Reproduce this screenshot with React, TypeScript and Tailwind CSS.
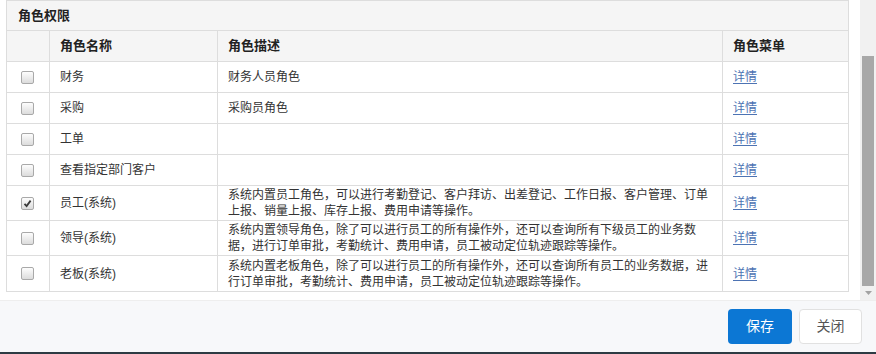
import React from "react";

type Role = {
  name: string;
  desc: string[];
  checked?: boolean;
};

const roles: Role[] = [
  { name: "财务", desc: ["财务人员角色"] },
  { name: "采购", desc: ["采购员角色"] },
  { name: "工单", desc: [] },
  { name: "查看指定部门客户", desc: [] },
  {
    name: "员工(系统)",
    checked: true,
    desc: [
      "系统内置员工角色，可以进行考勤登记、客户拜访、出差登记、工作日报、客户管理、订单",
      "上报、销量上报、库存上报、费用申请等操作。",
    ],
  },
  {
    name: "领导(系统)",
    desc: [
      "系统内置领导角色，除了可以进行员工的所有操作外，还可以查询所有下级员工的业务数",
      "据，进行订单审批，考勤统计、费用申请，员工被动定位轨迹跟踪等操作。",
    ],
  },
  {
    name: "老板(系统)",
    desc: [
      "系统内置老板角色，除了可以进行员工的所有操作外，还可以查询所有员工的业务数据，进",
      "行订单审批，考勤统计、费用申请，员工被动定位轨迹跟踪等操作。",
    ],
  },
];

function Checkbox({ checked }: { checked?: boolean }) {
  return (
    <span className="flex h-[13px] w-[13px] items-center justify-center rounded-[2px] border border-[#a9a9a9] bg-gradient-to-b from-[#fdfdfd] to-[#dcdcdc]">
      {checked && (
        <svg width="9" height="9" viewBox="0 0 9 9">
          <path d="M1.5 4.8 L3.6 7 L7.6 1.6" fill="none" stroke="#3a3a3a" strokeWidth="1.8" />
        </svg>
      )}
    </span>
  );
}

const cols = "grid grid-cols-[43px_168px_505px_1fr]";

export default function App() {
  return (
    <div
      className="flex h-[354px] w-[876px] flex-col bg-white text-[12px] text-[#333]"
      style={{ fontFamily: '"Liberation Sans", "Noto Sans CJK SC", sans-serif' }}
    >
      <div className="flex h-[300px]">
        {/* panel */}
        <div className="flex-1 pl-[6px] pr-[11px]">
          <div className="border border-[#dddddd]">
            <div className="flex h-[30px] items-center border-b border-[#dddddd] bg-[#f5f5f5] pl-[11px] text-[13px] font-bold text-[#222]">
              角色权限
            </div>
            <div className={`${cols} h-[31px] border-b border-[#dddddd] bg-[#f5f5f5] text-[13px] font-bold text-[#222]`}>
              <div className="border-r border-[#dddddd]" />
              <div className="flex items-center border-r border-[#dddddd] pl-[10px]">角色名称</div>
              <div className="flex items-center border-r border-[#dddddd] pl-[10px]">角色描述</div>
              <div className="flex items-center pl-[10px]">角色菜单</div>
            </div>
            {roles.map((r, i) => (
              <div
                key={r.name}
                className={`${cols} ${r.desc.length > 1 ? "h-[35px]" : "h-[31px]"} ${
                  i < roles.length - 1 ? "border-b border-[#dddddd]" : ""
                }`}
              >
                <div className="flex items-center border-r border-[#dddddd] pl-[14px]">
                  <Checkbox checked={r.checked} />
                </div>
                <div className="flex items-center border-r border-[#dddddd] pl-[10px]">{r.name}</div>
                <div className="flex flex-col justify-center border-r border-[#dddddd] pl-[10px] leading-[16px]">
                  {r.desc.map((l) => (
                    <div key={l} className="whitespace-nowrap">
                      {l}
                    </div>
                  ))}
                </div>
                <div className="flex items-center pl-[10px]">
                  <a className="text-[#4d73b3] underline underline-offset-2">详情</a>
                </div>
              </div>
            ))}
          </div>
        </div>
        {/* scrollbar */}
        <div className="flex w-[16px] flex-col bg-[#f1f1f1]">
          <div className="h-[56px]" />
          <div className="mx-[2px] h-[230px] bg-[#a8a8a8]" />
          <div className="flex flex-1 items-center justify-center">
            <svg width="7" height="4" viewBox="0 0 7 4">
              <path d="M0 0 L7 0 L3.5 4 Z" fill="#a3a3a3" />
            </svg>
          </div>
        </div>
      </div>
      {/* footer */}
      <div className="flex flex-1 items-center justify-end gap-[7px] border-t border-[#eeeeee] bg-[#f7f8fa] pr-[14px]">
        <button className="h-[35px] w-[64px] rounded-[4px] bg-[#0c77d4] text-[14px] text-white">保存</button>
        <button className="h-[35px] w-[63px] rounded-[4px] border border-[#e1e1e1] bg-white text-[14px] text-[#555]">
          关闭
        </button>
      </div>
      <div className="h-[2px] bg-[#2d3b43]" />
    </div>
  );
}
